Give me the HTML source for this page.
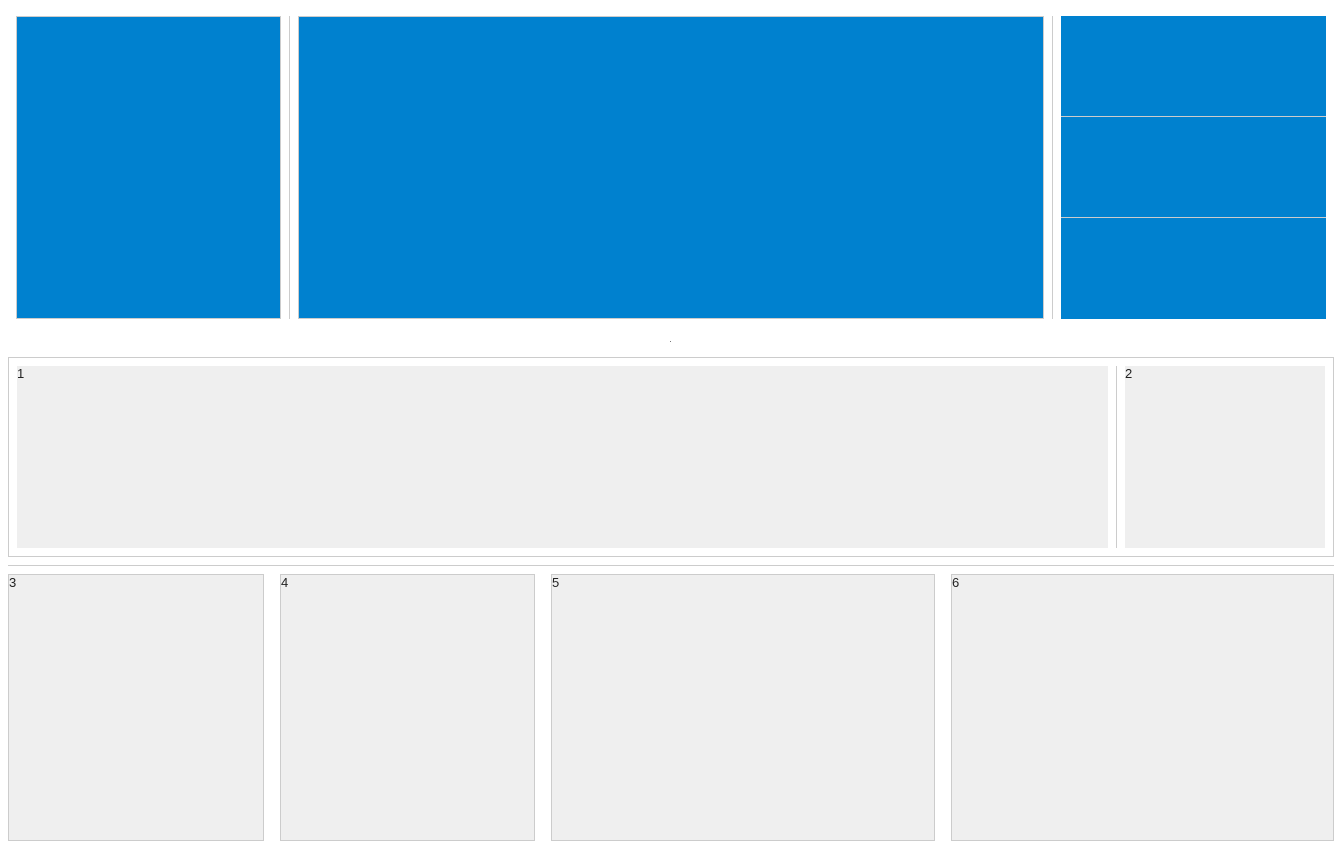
<!DOCTYPE html>
<html><head><meta charset="utf-8"><style>
*{box-sizing:border-box;margin:0;padding:0}
body{width:1342px;height:849px;background:#fff;position:relative;overflow:hidden;font-family:"Liberation Sans",sans-serif;font-size:13px;color:#222}
div{position:absolute}
.blue{background:#0081cf}
.b{border:1px solid #ccc}
.g{background:#efefef}
.vl{width:1px;background:#ccc}
.n{line-height:15px}
</style></head><body>
<div class="blue b" style="left:16px;top:16px;width:265px;height:303px"></div>
<div class="vl" style="left:289px;top:16px;height:303px"></div>
<div class="blue b" style="left:298px;top:16px;width:746px;height:303px"></div>
<div class="vl" style="left:1052px;top:16px;height:303px"></div>
<div class="blue" style="left:1061px;top:16px;width:265px;height:303px"></div>
<div style="left:1061px;top:116px;width:265px;height:1px;background:#ccc"></div>
<div style="left:1061px;top:217px;width:265px;height:1px;background:#ccc"></div>
<div style="left:670px;top:341px;width:1px;height:1px;background:#777"></div>

<div class="b" style="left:8px;top:357px;width:1326px;height:200px"></div>
<div class="g n" style="left:17px;top:366px;width:1091px;height:182px">1</div>
<div class="vl" style="left:1116px;top:366px;height:182px"></div>
<div class="g n" style="left:1125px;top:366px;width:200px;height:182px">2</div>
<div style="left:8px;top:565px;width:1326px;height:1px;background:#ccc"></div>

<div class="g b n" style="left:8px;top:574px;width:256px;height:267px">3</div>
<div class="g b n" style="left:280px;top:574px;width:255px;height:267px">4</div>
<div class="g b n" style="left:551px;top:574px;width:384px;height:267px">5</div>
<div class="g b n" style="left:951px;top:574px;width:383px;height:267px">6</div>
</body></html>
